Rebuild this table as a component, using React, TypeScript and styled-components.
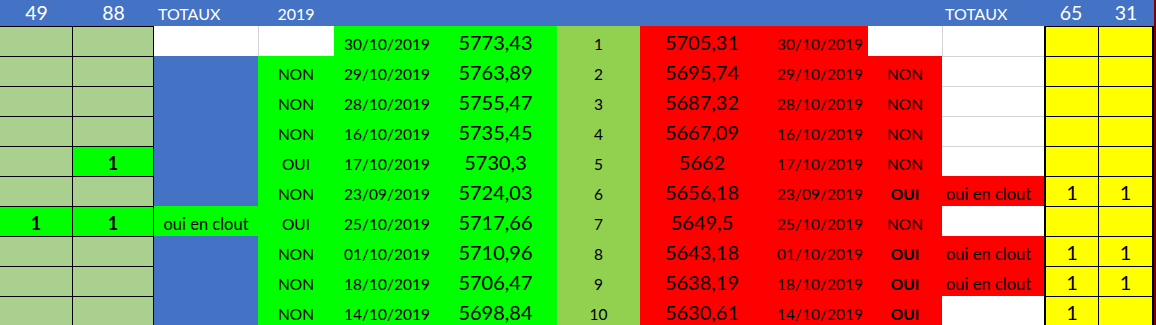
import React from "react";
import styled, { createGlobalStyle, css } from "styled-components";

const GlobalStyle = createGlobalStyle`
  html, body {
    margin: 0;
    padding: 0;
    background: #ffffff;
    overflow: hidden;
  }
`;

const FILLS: Record<string, string> = {
  S: "#a9d08e", // sage (totals columns)
  L: "#00ff00", // lime
  W: "#ffffff",
  B: "#4472c4",
  G: "#92d050", // index column
  R: "#ff0000",
  Y: "#ffff00",
};

type Align = "left" | "center" | "right";

interface ColumnSpec {
  align: Align;
  pl?: number;
  pr?: number;
  size: number;
}

const COLUMNS: ColumnSpec[] = [
  { align: "center", size: 18 },
  { align: "center", size: 18 },
  { align: "center", size: 16.5 },
  { align: "center", size: 15.5 },
  { align: "center", size: 15.5 },
  { align: "center", size: 20, pr: 6 },
  { align: "center", size: 15.5 },
  { align: "center", size: 20 },
  { align: "right", size: 15.5, pr: 5 },
  { align: "center", size: 15.5 },
  { align: "left", size: 16.5, pl: 4 },
  { align: "center", size: 20 },
  { align: "center", size: 20 },
];

const HEADER: { text: string; size: number; align: Align; pl?: number }[] = [
  { text: "49", size: 19.5, align: "center" },
  { text: "88", size: 19.5, align: "center" },
  { text: "TOTAUX", size: 16, align: "left", pl: 4 },
  { text: "2019", size: 16, align: "center" },
  { text: "", size: 15, align: "center" },
  { text: "", size: 15, align: "center" },
  { text: "", size: 15, align: "center" },
  { text: "", size: 15, align: "center" },
  { text: "", size: 15, align: "center" },
  { text: "", size: 15, align: "center" },
  { text: "TOTAUX", size: 16, align: "left", pl: 3 },
  { text: "65", size: 19.5, align: "center" },
  { text: "31", size: 19.5, align: "center" },
];

const ROWS: string[][] = [
  ["S", "S", "W", "W", "L:30/10/2019", "L:5773,43", "G:1", "R:5705,31", "R:30/10/2019", "W", "W", "Y", "Y"],
  ["S", "S", "B", "L:NON", "L:29/10/2019", "L:5763,89", "G:2", "R:5695,74", "R:29/10/2019", "R:NON", "W", "Y", "Y"],
  ["S", "S", "B", "L:NON", "L:28/10/2019", "L:5755,47", "G:3", "R:5687,32", "R:28/10/2019", "R:NON", "W", "Y", "Y"],
  ["S", "S", "B", "L:NON", "L:16/10/2019", "L:5735,45", "G:4", "R:5667,09", "R:16/10/2019", "R:NON", "W", "Y", "Y"],
  ["S", "L:1", "B", "L:OUI", "L:17/10/2019", "L:5730,3", "G:5", "R:5662", "R:17/10/2019", "R:NON", "W", "Y", "Y"],
  ["S", "S", "B", "L:NON", "L:23/09/2019", "L:5724,03", "G:6", "R:5656,18", "R:23/09/2019", "R:OUI", "R:oui en clout", "Y:1", "Y:1"],
  ["L:1", "L:1", "L:oui en clout", "L:OUI", "L:25/10/2019", "L:5717,66", "G:7", "R:5649,5", "R:25/10/2019", "R:NON", "W", "Y", "Y"],
  ["S", "S", "B", "L:NON", "L:01/10/2019", "L:5710,96", "G:8", "R:5643,18", "R:01/10/2019", "R:OUI", "R:oui en clout", "Y:1", "Y:1"],
  ["S", "S", "B", "L:NON", "L:18/10/2019", "L:5706,47", "G:9", "R:5638,19", "R:18/10/2019", "R:OUI", "R:oui en clout", "Y:1", "Y:1"],
  ["S", "S", "B", "L:NON", "L:14/10/2019", "L:5698,84", "G:10", "R:5630,61", "R:14/10/2019", "R:OUI", "W", "Y:1", "Y"],
];

const parse = (s: string) => {
  const i = s.indexOf(":");
  return i < 0 ? { fill: s, text: "" } : { fill: s.slice(0, i), text: s.slice(i + 1) };
};

const Sheet = styled.div`
  display: grid;
  grid-template-columns: 73px 81px 104px 76px 106px 117px 83px 124px 104px 74px 102px 54px 56px 2px;
  grid-template-rows: 26px repeat(10, 30px);
  width: 1156px;
  font-family: Lato, "Open Sans", sans-serif;
  color: #000;
`;

const justify = (a: Align) =>
  a === "left" ? "flex-start" : a === "right" ? "flex-end" : "center";

const HeaderCell = styled.div<{ $size: number; $align: Align; $pl?: number }>`
  display: flex;
  align-items: flex-end;
  justify-content: ${(p) => justify(p.$align)};
  padding: 0 0 4px ${(p) => p.$pl ?? 0}px;
  background: #4472c4;
  color: #ffffff;
  font-size: ${(p) => p.$size}px;
  line-height: 1;
  white-space: nowrap;
`;

type Edge = "none" | "black" | "thick" | "grid";

const edge = (e: Edge) =>
  e === "black" ? "1px solid #000" : e === "thick" ? "2px solid #000" : e === "grid" ? "1px solid #d4d4d4" : "none";

const Cell = styled.div<{
  $fill: string;
  $size: number;
  $bold: boolean;
  $align: Align;
  $pl?: number;
  $pr?: number;
  $top: Edge;
  $left: Edge;
  $right: Edge;
}>`
  box-sizing: border-box;
  display: flex;
  align-items: flex-end;
  justify-content: ${(p) => justify(p.$align)};
  padding: 0 ${(p) => p.$pr ?? 0}px 4px ${(p) => p.$pl ?? 0}px;
  background: ${(p) => p.$fill};
  font-size: ${(p) => p.$size}px;
  font-weight: ${(p) => (p.$bold ? 700 : 400)};
  line-height: 1;
  white-space: nowrap;
  ${(p) => css`
    border-top: ${edge(p.$top)};
    border-left: ${edge(p.$left)};
    border-right: ${edge(p.$right)};
  `}
`;

const EdgeStrip = styled.div`
  grid-column: 14;
  grid-row: 1 / span 11;
  background: #800000;
`;

export default function App() {
  return (
    <>
      <GlobalStyle />
      <Sheet>
        {HEADER.map((h, i) => (
          <HeaderCell key={`h${i}`} $size={h.size} $align={h.align} $pl={h.pl}>
            {h.text}
          </HeaderCell>
        ))}
        <EdgeStrip />
        {ROWS.map((row, r) =>
          row.map((raw, c) => {
            const { fill, text } = parse(raw);
            const col = COLUMNS[c];
            const above = r > 0 ? parse(ROWS[r - 1][c]).fill : "";
            const before = c > 0 ? parse(row[c - 1]).fill : "";
            let top: Edge = "none";
            let left: Edge = "none";
            let right: Edge = "none";
            if (c <= 1) {
              top = "black";
              right = "black";
            } else if (c === 11) {
              top = "black";
              left = "thick";
            } else if (c === 12) {
              top = "black";
              left = "black";
              right = "thick";
            } else if (fill === "W") {
              if (above === "W") top = "grid";
              if (before === "W") left = "grid";
            }
            const bold = c <= 1 || (c === 9 && text === "OUI");
            return (
              <Cell
                key={`${r}-${c}`}
                $fill={FILLS[fill]}
                $size={col.size}
                $bold={bold}
                $align={col.align}
                $pl={col.pl}
                $pr={col.pr}
                $top={top}
                $left={left}
                $right={right}
              >
                {text}
              </Cell>
            );
          })
        )}
      </Sheet>
    </>
  );
}
